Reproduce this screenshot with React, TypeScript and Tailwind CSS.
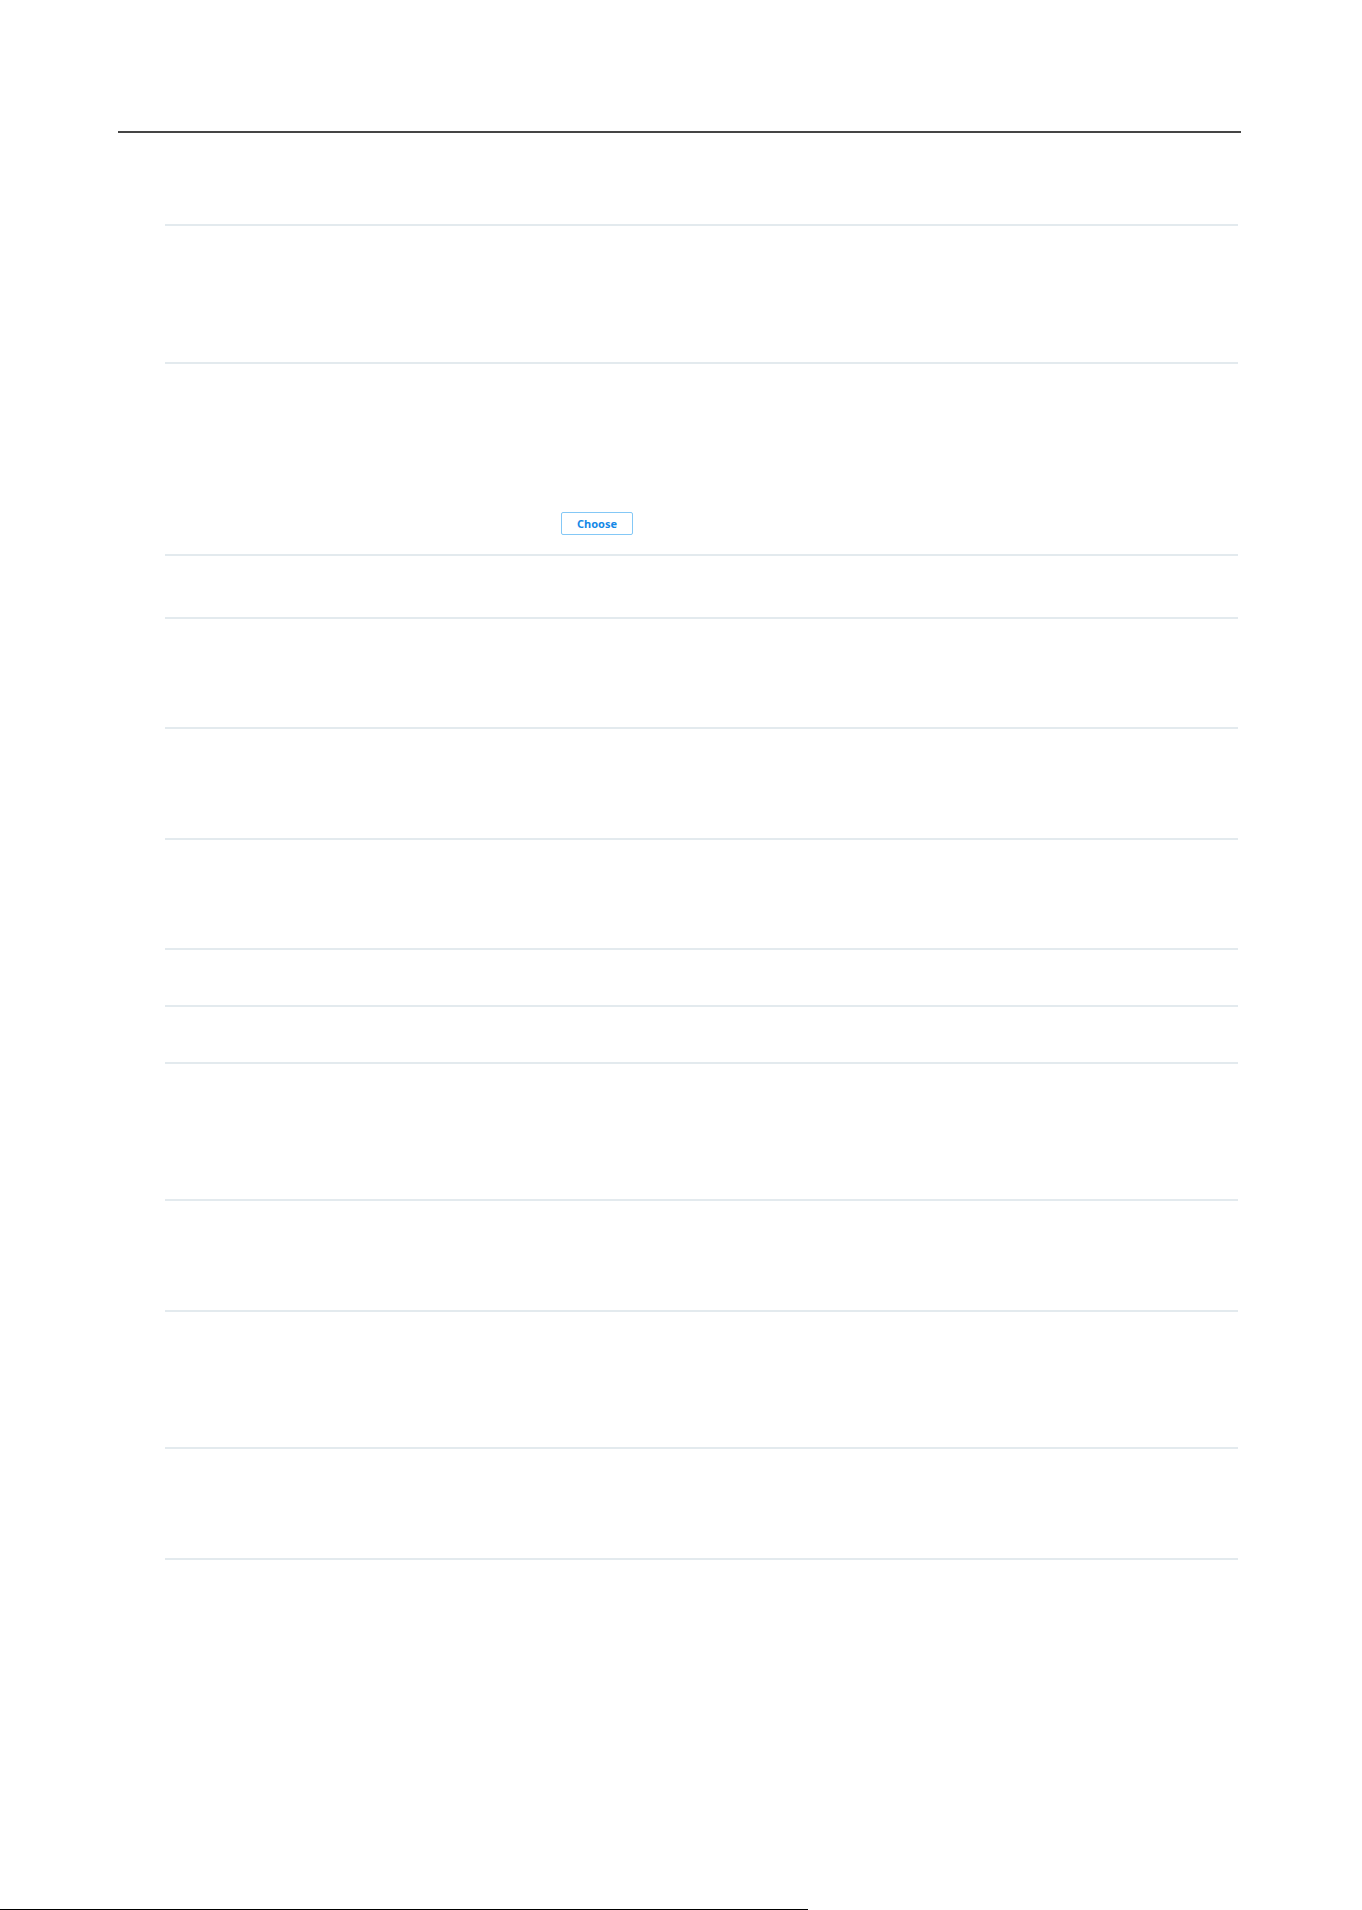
const rows: { h: string; choose?: boolean }[] = [
  { h: "h-[138px]" },
  { h: "h-[192px]", choose: true },
  { h: "h-[63px]" },
  { h: "h-[110px]" },
  { h: "h-[111px]" },
  { h: "h-[110px]" },
  { h: "h-[57px]" },
  { h: "h-[57px]" },
  { h: "h-[137px]" },
  { h: "h-[111px]" },
  { h: "h-[137px]" },
  { h: "h-[111px]" },
];

const ChooseButton = () => (
  <button
    type="button"
    className="ml-[396px] mb-[19px] h-[23px] w-[72px] rounded-[2px] border border-[#84c8f6] bg-white text-[11px] font-bold leading-none text-[#1488e6]"
    style={{ fontFamily: '"Noto Sans", "Liberation Sans", sans-serif' }}
  >
    Choose
  </button>
);

export default function App() {
  return (
    <div
      className="relative h-[1910px] w-full overflow-hidden bg-white"
      style={{ fontFamily: '"Noto Sans", "Liberation Sans", sans-serif' }}
    >
      <div className="pt-[131px] pl-[118px]">
        <div className="h-[2px] w-[1123px] bg-[#454545]" />
      </div>

      <div className="mt-[91px] ml-[165px] w-[1073px] border-t-2 border-[#e3eaee]">
        {rows.map((row, i) => (
          <div
            key={i}
            className={`box-border flex items-end border-b-2 border-[#e3eaee] ${row.h}`}
          >
            {row.choose ? <ChooseButton /> : null}
          </div>
        ))}
      </div>

      {/* cut-off strip at the very bottom of the capture */}
      <div className="absolute bottom-0 left-0 flex h-px w-full">
        <div className="h-px w-[808px] bg-black" />
      </div>
    </div>
  );
}
